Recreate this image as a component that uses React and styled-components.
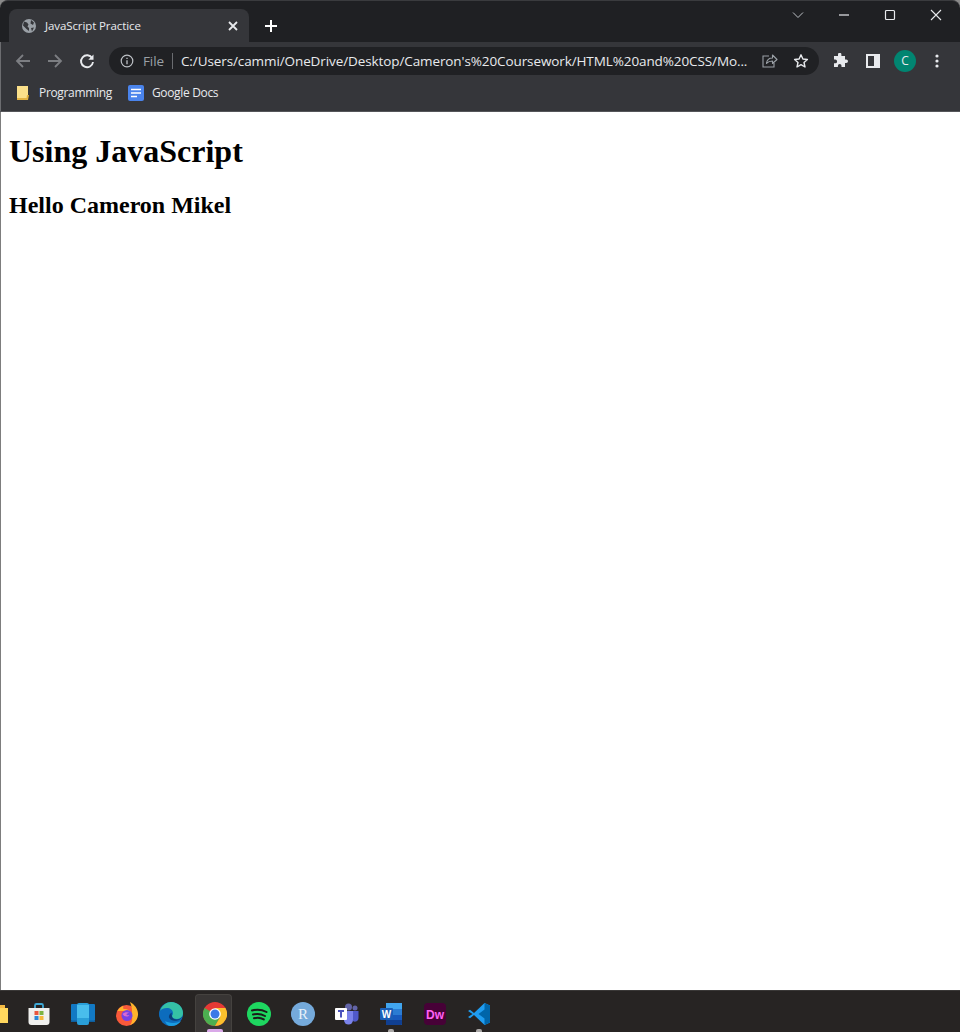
import React from "react";
import styled, {createGlobalStyle} from "styled-components";

const Global = createGlobalStyle`
  html, body {
    margin: 0;
    padding: 0;
    background: #fff;
  }
  #root {
    height: 1032px;
  }
`;

const Window = styled.div`
  width: 960px;
  height: 1032px;
  display: flex;
  flex-direction: column;
  overflow: hidden;
  background: #8a8a8a;
  font-family: "Open Sans", "Noto Sans", sans-serif;
`;

const TabStrip = styled.div`
  height: 42px;
  flex: none;
  display: flex;
  align-items: flex-end;
  justify-content: space-between;
  background: #1f2023;
  border-top: 1px solid #3a3b3e;
  border-radius: 8px 8px 0 0;
  box-sizing: border-box;
  padding-left: 9px;
`;

const TabGroup = styled.div`
  display: flex;
  align-items: center;
`;

const Tab = styled.div`
  width: 240px;
  height: 33px;
  box-sizing: border-box;
  background: #35363a;
  border-radius: 8px 8px 0 0;
  display: flex;
  align-items: center;
  padding: 0 11px 0 12px;
  color: #e8eaed;
  font-size: 11.5px;
  letter-spacing: -0.1px;
`;

const TabTitle = styled.span`
  flex: 1;
  margin-left: 8px;
`;

const NewTab = styled.div`
  margin-left: 15px;
  display: flex;
`;

const WindowControls = styled.div`
  align-self: flex-start;
  display: flex;
  align-items: center;
  height: 28px;
  padding-right: 18px;
  gap: 34px;
`;

const Toolbar = styled.div`
  height: 37px;
  flex: none;
  background: #35363a;
  box-shadow: inset 1px 0 0 #6c6d70;
  display: flex;
  align-items: center;
  padding: 0 13px 0 14px;
  box-sizing: border-box;
`;

const NavButtons = styled.div`
  display: flex;
  align-items: center;
  gap: 14px;
`;

const Omnibox = styled.div`
  width: 710px;
  height: 28px;
  margin-left: 13px;
  border-radius: 14px;
  background: #202124;
  display: flex;
  align-items: center;
  padding: 0 10px 0 11px;
  box-sizing: border-box;
  color: #e8eaed;
  font-size: 13.5px;
  letter-spacing: -0.1px;
`;

const FileLabel = styled.span`
  color: #9aa0a6;
  margin-left: 9px;
  padding-right: 8px;
  border-right: 1px solid #6a6c70;
  line-height: 16px;
  font-size: 13.5px;
`;

const Url = styled.span`
  flex: 1;
  margin-left: 8px;
  white-space: nowrap;
  overflow: hidden;
`;

const OmniActions = styled.div`
  display: flex;
  align-items: center;
  gap: 15px;
`;

const ToolActions = styled.div`
  display: flex;
  align-items: center;
  margin-left: 13px;
  gap: 14px;
`;

const Avatar = styled.div`
  width: 22px;
  height: 22px;
  border-radius: 50%;
  background: #018571;
  color: #e8eaed;
  font-size: 12px;
  display: flex;
  align-items: center;
  justify-content: center;
`;

const BookmarksBar = styled.div`
  height: 33px;
  flex: none;
  background: #35363a;
  box-shadow: inset 1px 0 0 #6c6d70;
  border-bottom: 1px solid #55565a;
  box-sizing: border-box;
  display: flex;
  align-items: center;
  padding: 0 0 5px 16px;
  gap: 16px;
`;

const Bookmark = styled.div`
  display: flex;
  align-items: center;
  gap: ${p => p.$gap}px;
  color: #e8eaed;
  font-size: 12px;
  letter-spacing: -0.33px;
`;

const Page = styled.main`
  flex: 1;
  background: #fff;
  border-left: 1px solid #7d7d7d;
  padding: 8px;
  color: #000;
  font-family: "Liberation Serif", "Times New Roman", serif;
`;

const Heading = styled.h1`
  font-size: 32px;
  margin: 13px 0 0;
  line-height: 37px;
`;

const SubHeading = styled.h2`
  font-size: 24px;
  margin: 22px 0 0;
  line-height: 27px;
`;

const Taskbar = styled.footer`
  height: 42px;
  flex: none;
  background: #272423;
  border-top: 1px solid #3a3837;
  box-sizing: border-box;
  display: flex;
  align-items: flex-end;
`;

const FolderStub = styled.div`
  width: 17px;
  display: flex;
  align-self: center;
  margin-top: 5px;
`;

const TaskSlot = styled.div`
  width: 44px;
  height: 38px;
  display: flex;
  align-items: center;
  justify-content: center;
  position: relative;
  box-sizing: border-box;
  padding-top: 2px;
  ${p => p.$active && `
    &::before {
      content: '';
      position: absolute;
      top: 0;
      bottom: 0;
      left: 2px;
      width: 37px;
      background: #383534;
      border: 1px solid #45423f;
      border-bottom: 0;
      border-radius: 4px 4px 0 0;
      box-sizing: border-box;
    }
  `}
  svg {
    position: relative;
  }
`;

const RunDot = styled.span`
  position: absolute;
  bottom: 0;
  left: 50%;
  transform: translateX(-50%);
  height: 3px;
  width: ${p => p.$wide ? 16 : 6}px;
  border-radius: 2px 2px 0 0;
  background: ${p => p.$wide ? "#d9a9e8" : "#a9a7a6"};
`;

const Icon = ({size = 16, height, children, view}) => (
  <svg width={size} height={height || size} viewBox={view || `0 0 ${size} ${height || size}`} fill="none" style={{display: "block", flex: "none"}}>
    {children}
  </svg>
);

const Globe = () => (
  <Icon size={16}>
    <circle cx="8" cy="8" r="7" fill="#9aa0a6"/>
    <path d="M3 3.500l3 1 1.500 2-1 2 1.500 1.500v3L5.500 11 2 7.500zM10 2l3 2.500-1 2.500-2.500-1.500zM10 10l3-.5-2 4z" fill="#35363a"/>
  </Icon>
);

const CloseX = ({color = "#e8eaed", size = 10, width = 1.8}) => (
  <Icon size={size}>
    <path d={`M1 1L${size - 1} ${size - 1}M${size - 1} 1L1 ${size - 1}`} stroke={color} strokeWidth={width}/>
  </Icon>
);

const Arrow = ({flip, color}) => (
  <Icon size={18}>
    <g transform={flip ? "translate(18 0) scale(-1 1)" : undefined}>
      <path d="M16 9H3M9 3L3 9l6 6" stroke={color} strokeWidth="1.800"/>
    </g>
  </Icon>
);

const Reload = () => (
  <Icon size={18}>
    <path d="M14.200 6.200A6 6 0 1 0 15 10" stroke="#e8eaed" strokeWidth="1.900"/>
    <path d="M15.500 2.500v5.200h-5.200z" fill="#e8eaed"/>
  </Icon>
);

const Info = () => (
  <Icon size={14}>
    <circle cx="7" cy="7" r="5.800" stroke="#bdc1c6" strokeWidth="1.200"/>
    <path d="M7 6.200v4M7 3.800v1.300" stroke="#bdc1c6" strokeWidth="1.300"/>
  </Icon>
);

const Share = () => (
  <Icon size={17}>
    <path d="M8 4H2v11h11v-4" stroke="#9aa0a6" strokeWidth="1.100"/>
    <path d="M5.500 11.500c.4-3.500 2.500-5.500 6-5.500V3l4.500 4.500-4.500 4V9c-2.500 0-4.500.7-6 2.500z" stroke="#9aa0a6" strokeWidth="1.100" strokeLinejoin="round"/>
  </Icon>
);

const Star = () => (
  <Icon size={16}>
    <path d="M8 1.800l1.900 4.200 4.500.5-3.400 3 1 4.500L8 11.700 4 14l1-4.500-3.400-3 4.500-.5z" stroke="#e8eaed" strokeWidth="1.400" strokeLinejoin="round"/>
  </Icon>
);

const Puzzle = () => (
  <Icon size={16}>
    <path d="M6 1.500a1.700 1.700 0 0 1 3.400 0V3h3.600v3.500h1.200a1.800 1.800 0 0 1 0 3.600H13V14H9.500v-1.200a1.800 1.800 0 0 0-3.600 0V14H2v-3.700h1.200a1.900 1.900 0 0 0 0-3.800H2V3h4z" fill="#e8eaed"/>
  </Icon>
);

const SidePanel = () => (
  <Icon size={18} height={14}>
    <rect x="4" y="0" width="14" height="14" fill="#e8eaed"/>
    <rect x="6" y="2" width="6" height="10" fill="#35363a"/>
  </Icon>
);

const Kebab = () => (
  <Icon size={14}>
    <circle cx="7" cy="2" r="1.600" fill="#e8eaed"/>
    <circle cx="7" cy="7" r="1.600" fill="#e8eaed"/>
    <circle cx="7" cy="12" r="1.600" fill="#e8eaed"/>
  </Icon>
);

const Folder = () => (
  <Icon size={16}>
    <path d="M1 1h11v13H1z" fill="#fbe08a"/>
    <path d="M1 13h9.500l.5-3h2l-1 5H1z" fill="#e3b341"/>
  </Icon>
);

const Docs = () => (
  <Icon size={16}>
    <rect x="0" y="0" width="16" height="16" rx="2" fill="#4a84ec"/>
    <path d="M3 4.500h10M3 8h10M3 11.500h6" stroke="#fff" strokeWidth="1.500"/>
  </Icon>
);

const StoreIcon = () => (
  <Icon size={24}>
    <path d="M8 6V3.500A1.500 1.500 0 0 1 9.500 2h5A1.500 1.500 0 0 1 16 3.500V6" stroke="#3fa9d6" strokeWidth="1.800"/>
    <path d="M1.500 6h21v14a3 3 0 0 1-3 3h-15a3 3 0 0 1-3-3z" fill="#f0f0ee"/>
    <rect x="7.500" y="9" width="4" height="4" fill="#e9573f"/>
    <rect x="12.500" y="9" width="4" height="4" fill="#7cb342"/>
    <rect x="7.500" y="14" width="4" height="4" fill="#2b88d8"/>
    <rect x="12.500" y="14" width="4" height="4" fill="#f6b73c"/>
  </Icon>
);

const DeviceIcon = () => (
  <Icon size={24}>
    <rect x="0" y="2" width="24" height="17" rx="1" fill="#1279c4"/>
    <path d="M0 18.500h24v1.500H0z" fill="#0e5f9f"/>
    <rect x="6" y="1" width="12" height="22" rx="2" fill="#2a9fd8"/>
    <rect x="6" y="3" width="12" height="13" fill="#49bdec"/>
  </Icon>
);

const FirefoxIcon = () => (
  <Icon size={24}>
    <circle cx="11.500" cy="13.500" r="10.500" fill="#f8593a"/>
    <path d="M2.500 9c1.500-3 4-4.500 6-5C8 5 8 6 8.500 7c3-.5 7 1 8 5 1-3 .5-7-1.500-12 4.500 2.500 8.500 7 8 13-.5 5-4 9-8 10 3-3 4-12-4-14z" fill="#ffb32c"/>
    <circle cx="12" cy="13.500" r="5.500" fill="#7542e5"/>
    <path d="M7.500 12c2-2 5-2.500 7-1-1.500 0-3 .5-3 1.500 0 .8 1.500 1 3 .7-1.500 2-5.500 1.800-7-1.200z" fill="#d96bd0"/>
  </Icon>
);

const EdgeIcon = () => (
  <Icon size={24}>
    <circle cx="12" cy="12" r="12" fill="#0c6cbd"/>
    <path d="M1 9C3 3 8 0 12 0c7 0 12 5 12 11 0 4-3 6-6 6-3 0-5-1-5-3 0-1 1-1 1-3 0-3-3-5-6-5-3 0-6 1-7 3z" fill="#35c1a5"/>
    <path d="M22 19c-2 3-6 5-10 5-3 0-5-2-6-5 3 2 11 3 16 0z" fill="#1b9de2"/>
    <path d="M13 14c0 2 2 3.500 5 3.500 2 0 4-1 5-3-1 5-11 6-13 1-.5-2 1-4 3-5-.5 1-.5 2.500 0 3.500z" fill="#0a3e78"/>
  </Icon>
);

const ChromeIcon = () => (
  <Icon size={24}>
    <circle cx="12" cy="12" r="12" fill="#e53935"/>
    <path d="M12 12L1.600 6A12 12 0 0 0 12 24l6-10.400z" fill="#4caf50"/>
    <path d="M12 6h10.400A12 12 0 0 1 12 24l5.200-9z" fill="#fbc02d"/>
    <circle cx="12" cy="12" r="5.800" fill="#fff"/>
    <circle cx="12" cy="12" r="4.500" fill="#3b78e7"/>
  </Icon>
);

const SpotifyIcon = () => (
  <Icon size={24}>
    <circle cx="12" cy="12" r="12" fill="#1ed760"/>
    <path d="M5 8.500c5-1.500 10-1 14.500 1.500M6 12.500c4.500-1 8.500-.6 12 1.500M7 16.200c3.500-.8 7-.5 9.800 1.200" stroke="#1b1b1b" strokeWidth="2" strokeLinecap="round"/>
  </Icon>
);

const RIcon = () => (
  <Icon size={24}>
    <circle cx="12" cy="12" r="12" fill="#75aadb"/>
    <text x="12" y="17" textAnchor="middle" fontFamily="Liberation Serif, serif" fontSize="15" fill="#e8f1fa">R</text>
  </Icon>
);

const TeamsIcon = () => (
  <Icon size={24}>
    <circle cx="13.500" cy="5" r="3.500" fill="#6264a7"/>
    <circle cx="20" cy="6" r="2.500" fill="#6264a7"/>
    <path d="M9 9h9v9a4.500 4.500 0 0 1-9 0z" fill="#7b83eb"/>
    <path d="M18 9h5.500v7a3.500 3.500 0 0 1-5.500 3z" fill="#5059c9"/>
    <rect x="0" y="6" width="12" height="12" rx="1" fill="#fff"/>
    <path d="M3 9h6M6 9v6.500" stroke="#4b53bc" strokeWidth="2"/>
  </Icon>
);

const WordIcon = () => (
  <Icon size={24}>
    <path d="M7 1h15a1 1 0 0 1 1 1v20a1 1 0 0 1-1 1H7z" fill="#2b7cd3"/>
    <path d="M7 1h16v6H7z" fill="#41a5ee"/>
    <path d="M7 13h16v5H7z" fill="#185abd"/>
    <path d="M7 18h16v4a1 1 0 0 1-1 1H7z" fill="#103f91"/>
    <rect x="1" y="6" width="13" height="12" rx="1" fill="#1a5fb8"/>
    <text x="7.500" y="15.500" textAnchor="middle" fontFamily="Liberation Sans, sans-serif" fontWeight="700" fontSize="10" fill="#fff">W</text>
  </Icon>
);

const DreamweaverIcon = () => (
  <Icon size={24}>
    <rect x="1" y="1" width="22" height="22" rx="4" fill="#470137"/>
    <text x="12" y="16.500" textAnchor="middle" fontFamily="Liberation Sans, sans-serif" fontWeight="700" fontSize="12" fill="#ff61f6">Dw</text>
  </Icon>
);

const VSCodeIcon = () => (
  <Icon size={24}>
    <path d="M17.500 1L23 3.500v17L17.500 23 7 13l-4 3.200L1 15l4.500-3L1 9l2-1.200L7 11z" fill="#1f9cf0"/>
    <path d="M17.500 1L23 3.500v17L17.500 23V16.500L11.500 12l6-4.500z" fill="#0065a9"/>
  </Icon>
);

const PartialFolder = () => (
  <Icon size={8} height={18}>
    <path d="M0 0h5v4H0z" fill="#f4b942"/>
    <path d="M0 3h8v15H0z" fill="#ffd75e"/>
  </Icon>
);

const tasks = [
  {icon: <StoreIcon/>, key: "store"},
  {icon: <DeviceIcon/>, key: "device"},
  {icon: <FirefoxIcon/>, key: "firefox"},
  {icon: <EdgeIcon/>, key: "edge"},
  {icon: <ChromeIcon/>, key: "chrome", active: true, dot: "wide"},
  {icon: <SpotifyIcon/>, key: "spotify"},
  {icon: <RIcon/>, key: "r"},
  {icon: <TeamsIcon/>, key: "teams"},
  {icon: <WordIcon/>, key: "word", dot: "small"},
  {icon: <DreamweaverIcon/>, key: "dw"},
  {icon: <VSCodeIcon/>, key: "vscode", dot: "small"},
];

export default function App() {
  return (
    <Window>
      <Global/>
      <TabStrip>
        <TabGroup>
          <Tab>
            <Globe/>
            <TabTitle>JavaScript Practice</TabTitle>
            <CloseX/>
          </Tab>
          <NewTab>
            <Icon size={14}>
              <path d="M7 1v12M1 7h12" stroke="#fff" strokeWidth="2"/>
            </Icon>
          </NewTab>
        </TabGroup>
        <WindowControls>
          <Icon size={12}>
            <path d="M1 3.500l5 5 5-5" stroke="#bdc1c6" strokeWidth="1"/>
          </Icon>
          <Icon size={12}>
            <path d="M1 6h10" stroke="#e8eaed" strokeWidth="1.200"/>
          </Icon>
          <Icon size={12}>
            <rect x="1.500" y="1.500" width="9" height="9" rx="1" stroke="#e8eaed" strokeWidth="1.200"/>
          </Icon>
          <CloseX size={12} width={1.1}/>
        </WindowControls>
      </TabStrip>
      <Toolbar>
        <NavButtons>
          <Arrow color="#7c7e82"/>
          <Arrow flip color="#7c7e82"/>
          <Reload/>
        </NavButtons>
        <Omnibox>
          <Info/>
          <FileLabel>File</FileLabel>
          <Url>C:/Users/cammi/OneDrive/Desktop/Cameron's%20Coursework/HTML%20and%20CSS/Mo...</Url>
          <OmniActions>
            <Share/>
            <Star/>
          </OmniActions>
        </Omnibox>
        <ToolActions>
          <Puzzle/>
          <SidePanel/>
          <Avatar>C</Avatar>
          <Kebab/>
        </ToolActions>
      </Toolbar>
      <BookmarksBar>
        <Bookmark $gap={7}><Folder/>Programming</Bookmark>
        <Bookmark $gap={8}><Docs/>Google Docs</Bookmark>
      </BookmarksBar>
      <Page>
        <Heading>Using JavaScript</Heading>
        <SubHeading>Hello Cameron Mikel</SubHeading>
      </Page>
      <Taskbar>
        <FolderStub><PartialFolder/></FolderStub>
        {tasks.map(t => (
          <TaskSlot key={t.key} $active={t.active}>
            {t.icon}
            {t.dot && <RunDot $wide={t.dot === "wide"}/>}
          </TaskSlot>
        ))}
      </Taskbar>
    </Window>
  );
}
